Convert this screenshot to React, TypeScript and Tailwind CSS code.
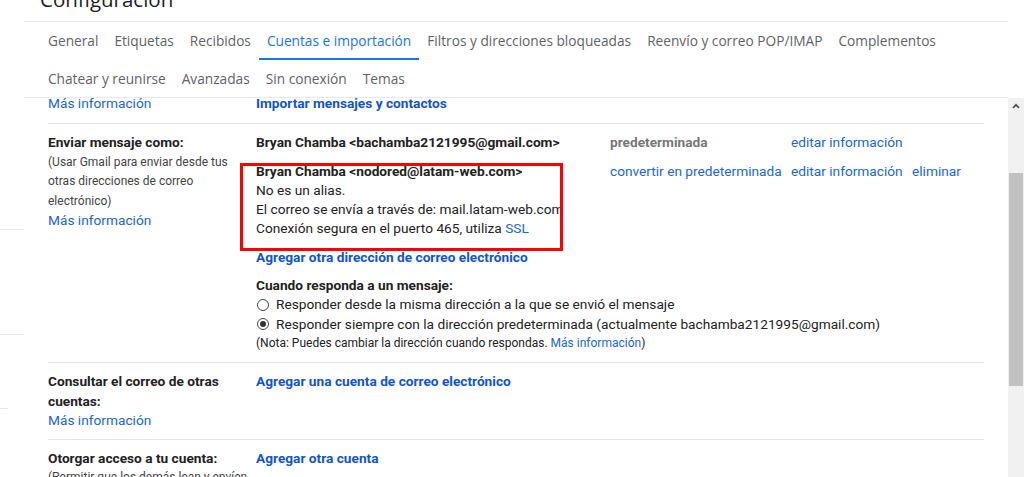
const tabsTop = [
  'General',
  'Etiquetas',
  'Recibidos',
  'Cuentas e importación',
  'Filtros y direcciones bloqueadas',
  'Reenvío y correo POP/IMAP',
  'Complementos',
];

const tabsBottom = ['Chatear y reunirse', 'Avanzadas', 'Sin conexión', 'Temas'];

function Tab({ label, active }: { label: string; active?: boolean }) {
  return (
    <div
      className={
        active
          ? 'h-full flex items-center px-2 pt-[2px] border-b-2 border-[#1a73e8] text-[#1a73e8]'
          : 'h-full flex items-center px-2 text-[#5f6368]'
      }
    >
      {label}
    </div>
  );
}

function Link({ children, bold }: { children: React.ReactNode; bold?: boolean }) {
  return <span className={bold ? 'font-bold text-[#15c]' : 'text-[#1a66d6]'}>{children}</span>;
}

function Radio({ checked }: { checked?: boolean }) {
  return (
    <span className="w-[12px] h-[12px] rounded-full border border-[#444] flex items-center justify-center mr-[7px] ml-[1px]">
      {checked && <span className="w-[6px] h-[6px] rounded-full bg-[#333]" />}
    </span>
  );
}

export default function App() {
  return (
    <div className="relative w-[1024px] h-[477px] overflow-hidden bg-white font-['Roboto',sans-serif] text-[13.7px] leading-[19.3px] text-[#222]">
      {/* header */}
      <div className="h-[21px] overflow-hidden pl-[40px]">
        <div className="-mt-[12px] font-['Open_Sans',sans-serif] text-[20.5px] leading-[22px] text-[#202124]">
          Configuración
        </div>
      </div>
      <div className="ml-[24px] w-[984px] border-b border-[#e8eaed]" />
      <div className="pl-[40px] font-['Open_Sans',sans-serif] text-[13.7px] font-medium">
        <div className="h-[38px] flex">
          {tabsTop.map((t) => (
            <Tab key={t} label={t} active={t === 'Cuentas e importación'} />
          ))}
        </div>
        <div className="h-[37px] flex">
          {tabsBottom.map((t) => (
            <Tab key={t} label={t} />
          ))}
        </div>
      </div>
      <div className="ml-[24px] w-[984px] border-b border-[#e8eaed]" />

      {/* body */}
      <div className="flex h-[379px]">
        <div className="w-[24px] shrink-0 flex flex-col">
          <div className="mt-[131px] w-[24px] border-b border-[#e8e8e8]" />
          <div className="mt-[104px] w-[24px] border-b border-[#e8e8e8]" />
          <div className="mt-[73px] w-[8px] border-b border-[#e8e8e8]" />
        </div>

        <div className="w-[984px] overflow-hidden">
          <div className="-mt-[4px]">
            <div className="mx-[24px] flex border-b border-[#e5e5e5] pb-[10px]">
              <div className="w-[208px] shrink-0">
                <Link>Más información</Link>
              </div>
              <div>
                <Link bold>Importar mensajes y contactos</Link>
              </div>
            </div>

            <div className="mx-[24px] flex border-b border-[#e5e5e5] pt-[9px] pb-[9px]">
              <div className="w-[208px] shrink-0 pr-[6px]">
                <div className="font-bold">Enviar mensaje como:</div>
                <div className="text-[12px] leading-[19.5px] text-[#444]">
                  (Usar Gmail para enviar desde tus otras direcciones de correo electrónico)
                </div>
                <Link>Más información</Link>
              </div>
              <div className="flex-1">
                <div className="grid grid-cols-[354px_181px_121px_auto]">
                  <div className="font-bold">Bryan Chamba &lt;bachamba2121995@gmail.com&gt;</div>
                  <div className="font-bold text-[#777]">predeterminada</div>
                  <div>
                    <Link>editar información</Link>
                  </div>
                  <div />
                  <div className="mt-[9px] whitespace-nowrap">
                    <div className="font-bold">Bryan Chamba &lt;nodored@latam-web.com&gt;</div>
                    <div>No es un alias.</div>
                    <div>El correo se envía a través de: mail.latam-web.com</div>
                    <div>
                      Conexión segura en el puerto 465, utiliza <Link>SSL</Link>
                    </div>
                  </div>
                  <div className="mt-[9px]">
                    <Link>convertir en predeterminada</Link>
                  </div>
                  <div className="mt-[9px]">
                    <Link>editar información</Link>
                  </div>
                  <div className="mt-[9px]">
                    <Link>eliminar</Link>
                  </div>
                </div>
                <div className="mt-[9px]">
                  <Link bold>Agregar otra dirección de correo electrónico</Link>
                </div>
                <div className="mt-[9px] font-bold">Cuando responda a un mensaje:</div>
                <div className="flex items-center">
                  <Radio />
                  Responder desde la misma dirección a la que se envió el mensaje
                </div>
                <div className="flex items-center">
                  <Radio checked />
                  Responder siempre con la dirección predeterminada (actualmente bachamba2121995@gmail.com)
                </div>
                <div className="text-[12px] leading-[19.3px]">
                  (Nota: Puedes cambiar la dirección cuando respondas. <Link>Más información</Link>)
                </div>
              </div>
            </div>

            <div className="mx-[24px] flex border-b border-[#e5e5e5] pt-[9px] pb-[9px]">
              <div className="w-[208px] shrink-0 pr-[6px]">
                <div className="font-bold">Consultar el correo de otras cuentas:</div>
                <Link>Más información</Link>
              </div>
              <div>
                <Link bold>Agregar una cuenta de correo electrónico</Link>
              </div>
            </div>

            <div className="mx-[24px] flex pt-[9px]">
              <div className="w-[208px] shrink-0 pr-[6px]">
                <div className="font-bold">Otorgar acceso a tu cuenta:</div>
                <div className="text-[12px] leading-[19.5px] text-[#444]">
                  (Permitir que los demás lean y envíen correos en tu nombre)
                </div>
              </div>
              <div>
                <Link bold>Agregar otra cuenta</Link>
              </div>
            </div>
          </div>
        </div>

        {/* scrollbar */}
        <div className="w-[16px] shrink-0 bg-[#f1f1f1] flex flex-col items-center">
          <svg width="8" height="6" viewBox="0 0 8 6" className="mt-[5px]">
            <path d="M1 5 L4 1.8 L7 5" fill="none" stroke="#505050" strokeWidth="1.8" />
          </svg>
          <div className="mt-[64px] w-[14px] h-[213px] bg-[#c1c1c1]" />
        </div>
      </div>

      {/* annotation box */}
      <div className="absolute left-[240px] top-[163px] w-[323px] h-[88px] border-[3px] border-[#f00]" />
    </div>
  );
}
